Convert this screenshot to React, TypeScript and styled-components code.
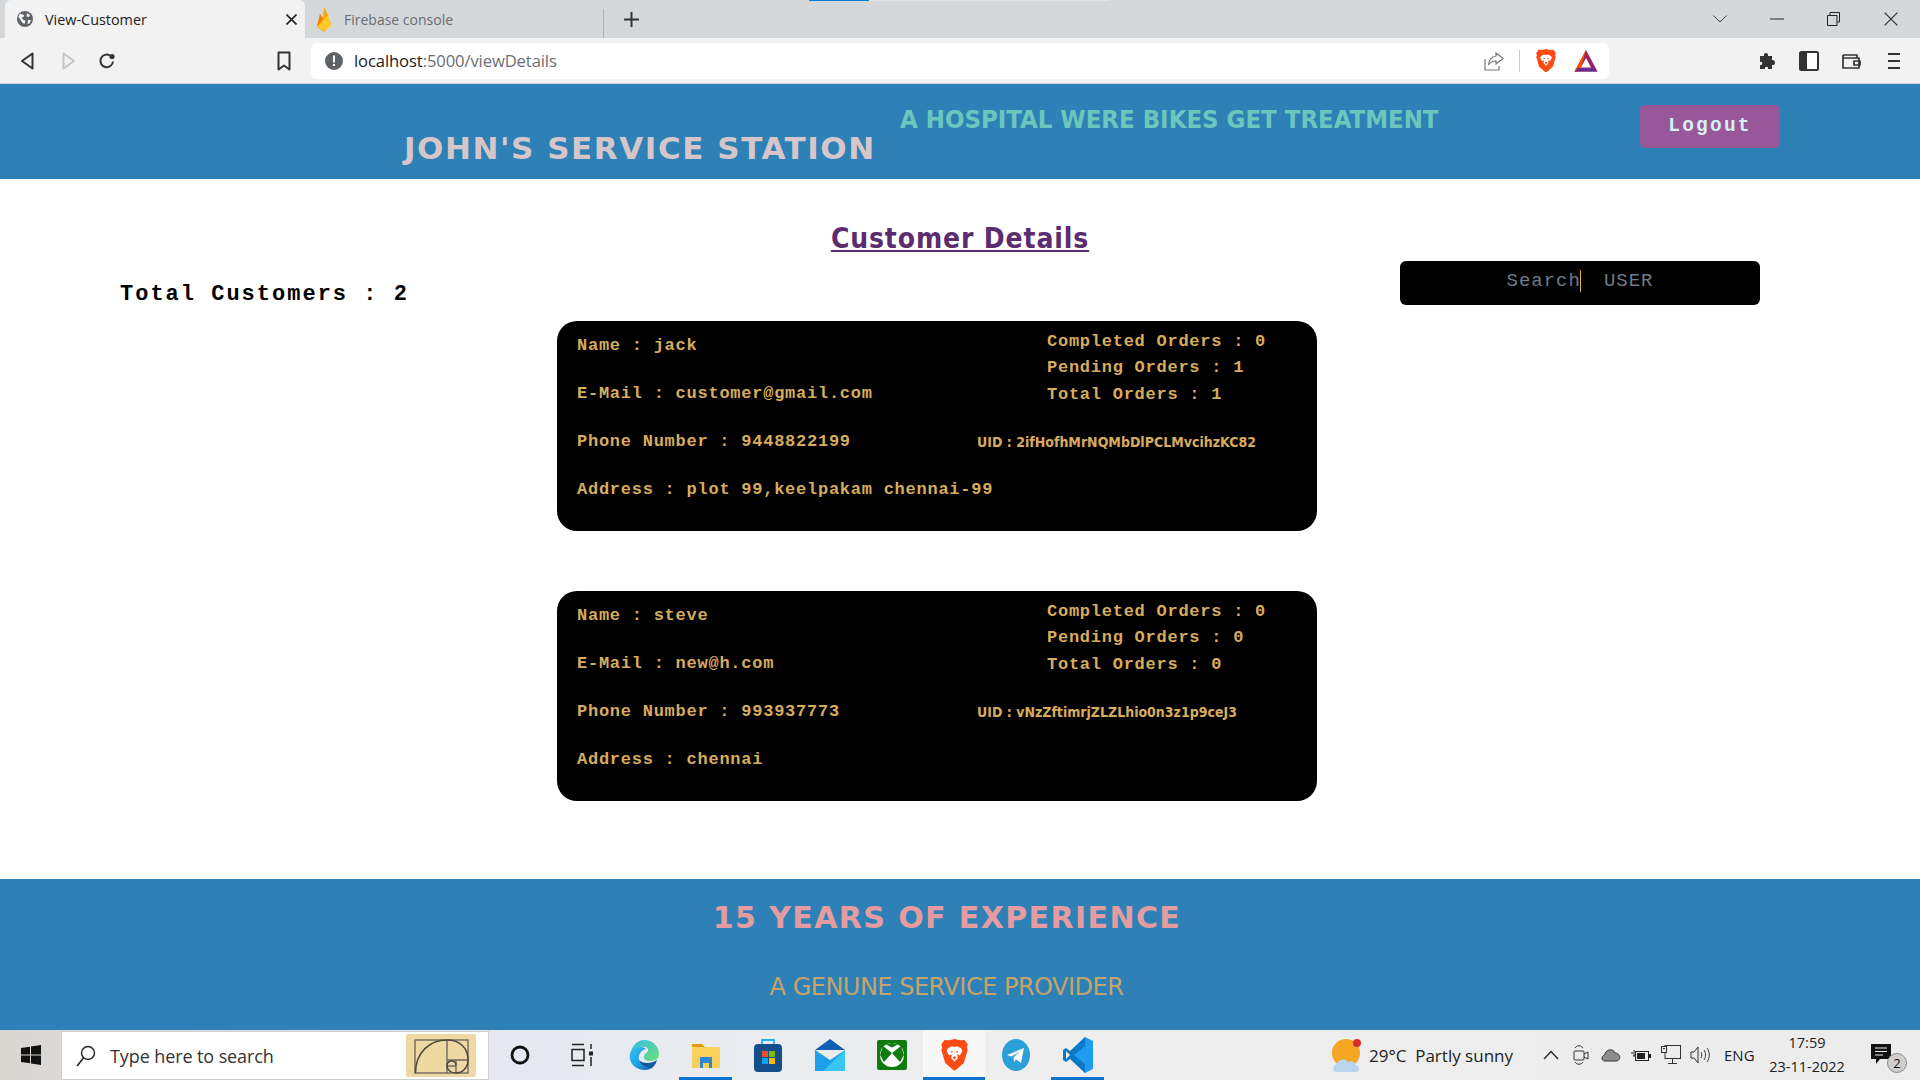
import React from "react";
import styled, { createGlobalStyle } from "styled-components";

const Global = createGlobalStyle`
  html, body { margin: 0; padding: 0; background: #fff; }
  #root { width: 1920px; height: 1080px; overflow: hidden; }
  * { box-sizing: border-box; }
`;

const Screen = styled.div`
  width: 1920px; height: 1080px; display: flex; flex-direction: column; position: relative;
  font-family: "Open Sans", "Liberation Sans", sans-serif;
`;

/* ---- browser chrome ---- */
const TabStrip = styled.div`
  height: 38px; background: #d5d8db; display: flex; align-items: stretch; padding-left: 5px; position: relative;
`;
const ActiveTab = styled.div`
  width: 300px; background: #f2f2f2; border-radius: 6px 6px 0 0; display: flex; align-items: center;
  padding: 0 8px 0 12px; color: #202124; font-size: 14.4px; gap: 12px;
  span { flex: 1; }
`;
const IdleTab = styled.div`
  width: 299px; display: flex; align-items: center; padding-left: 11px; gap: 12px; color: #6a6c70; font-size: 14px;
  border-right: 1px solid #aeb1b5; margin: 9px 0 0; padding-bottom: 9px;
`;
const NewTab = styled.div`
  width: 54px; display: flex; align-items: center; justify-content: center;
`;
const LoadBar = styled.div`
  position: absolute; left: 809px; top: 0; width: 301px; height: 1px; background: #e2e3e5;
  i { display: block; width: 60px; height: 1px; background: #0a7bd8; }
`;
const WindowButtons = styled.div`
  margin-left: auto; display: flex; align-items: center; padding-right: 1px;
`;
const WinBtn = styled.div<{ $w?: number }>`
  width: ${p => p.$w ?? 57}px; display: flex; align-items: center; justify-content: center; height: 38px;
`;
const Toolbar = styled.div`
  height: 46px; background: #f2f2f2; border-bottom: 1px solid #d4d6d8; display: flex; align-items: center;
`;
const ToolBtn = styled.div<{ $w: number }>`
  width: ${p => p.$w}px; height: 36px; display: flex; align-items: center; justify-content: center; flex: none;
`;
const BookmarkBtn = styled(ToolBtn)` justify-content: flex-end; padding-right: 12px; `;
const ExtensionBtn = styled(ToolBtn)` margin-left: 138px; `;
const Omnibox = styled.div`
  width: 1298px; height: 36px; margin-left: 8px; background: #fff; border-radius: 6px; display: flex; align-items: center;
  padding-left: 14px; font-size: 16.6px; color: #6b6e72; flex: none;
  b { font-weight: 400; color: #202124; }
`;
const UrlText = styled.span` margin-left: 11px; flex: 1; letter-spacing: -0.1px; `;

/* ---- page ---- */
const Header = styled.header`
  height: 95px; background: #2e81b7; display: flex; align-items: flex-start; flex: none;
`;
const Brand = styled.h1`
  margin: 46px 0 0 404px; font: 700 31px/36px "DejaVu Sans", sans-serif; color: #d6c6ca; letter-spacing: 1.55px; white-space: nowrap;
  width: 496px;
`;
const Tagline = styled.div`
  margin-top: 19px; font: 700 25.5px/32px "DejaVu Sans", sans-serif; font-stretch: condensed; color: #6cc6bc; white-space: nowrap; width: 540px;
`;
const LogoutButton = styled.button`
  margin: 21px 0 0 200px; width: 140px; height: 43px; background: #985799; color: #d3f1f1; border: 0; border-radius: 5px;
  font: 700 19.5px "Liberation Mono", monospace; letter-spacing: 2.2px; padding: 0 0 2px;
`;
const Main = styled.main`
  flex: 1; background: #fff; display: flex; flex-direction: column; min-height: 0;
`;
const Title = styled.h2`
  margin: 39px 0 0; height: 42px; text-align: center; color: #5b2c6f; text-decoration: underline;
  font: 700 28px/42px "DejaVu Sans", sans-serif; font-stretch: condensed; letter-spacing: 0.85px;
`;
const ToolsRow = styled.div`
  display: flex; justify-content: space-between; align-items: flex-start; height: 44px; margin-top: 1px; padding: 0 160px 0 120px;
`;
const Total = styled.div`
  font: 700 22px/44px "Liberation Mono", monospace; color: #000; letter-spacing: 2px; margin-top: 12px;
`;
const SearchBox = styled.div`
  width: 360px; height: 44px; background: #000; border-radius: 6px; display: flex; align-items: center; justify-content: center;
  font: 400 19px "Liberation Mono", monospace; letter-spacing: 1px; color: #6f7b86; white-space: pre; padding-bottom: 4px;
`;
const Caret = styled.i`
  display: inline-block; width: 1px; height: 22px; background: #e0b030; margin: 0 23px 0 -1px;
`;
const CardList = styled.div`
  display: flex; flex-direction: column; gap: 60px; margin: 16px 0 0 557px; width: 760px;
`;
const Card = styled.article`
  height: 210px; background: #000; border-radius: 20px; color: #d8ac5c; display: grid; grid-template-columns: 400px 340px;
  padding: 1px 0 0 20px; font: 700 17px "Liberation Mono", monospace; letter-spacing: 0.75px;
`;
const Field = styled.div` line-height: 48px; white-space: nowrap; width: 400px; `;
const Stats = styled.div` padding-top: 7px; `;
const Stat = styled.div` line-height: 26.3px; margin-left: 70px; white-space: nowrap; `;
const Uid = styled.div`
  margin-top: 21px; font: 700 14px/26px "DejaVu Sans", sans-serif; font-stretch: condensed; letter-spacing: 0; white-space: nowrap;
`;
const Footer = styled.footer`
  height: 151px; background: #2e81b7; flex: none; text-align: center;
`;
const FooterTitle = styled.div`
  margin: 19px 26px 0 0; font: 700 30px/40px "DejaVu Sans", sans-serif; color: #e59ca0; letter-spacing: 1.4px;
`;
const FooterSub = styled.div`
  margin: 34px 27px 0 0; font: 400 24px/30px "DejaVu Sans", sans-serif; color: #c6a36a; letter-spacing: -0.5px;
`;

/* ---- taskbar ---- */
const Taskbar = styled.div`
  height: 50px; flex: none; display: flex; align-items: stretch;
  background: linear-gradient(90deg, #d9d6d2 0, #e6e9f2 500px, #eeeeee 1000px, #ececec 100%);
`;
const StartBtn = styled.div` width: 61px; display: flex; align-items: center; justify-content: center; `;
const SearchField = styled.div`
  width: 428px; margin-top: 1px; background: #fff; border: 1px solid #cfcfcf; display: flex; align-items: center;
  padding: 0 12px 0 13px; font-size: 18px; color: #333; gap: 13px;
  span { flex: 1; letter-spacing: -0.1px; }
`;
const TaskTile = styled.div<{ $open?: boolean; $active?: boolean }>`
  width: 62px; display: flex; align-items: center; justify-content: center; position: relative;
  background: ${p => (p.$active ? "#f7f7f7" : "transparent")};
  &::after {
    content: ""; position: absolute; bottom: 0; height: 3px; left: ${p => (p.$active ? 0 : 4)}px; right: ${p => (p.$active ? 0 : 5)}px;
    background: ${p => (p.$open || p.$active ? "#0a74d0" : "transparent")};
  }
`;
const Tray = styled.div`
  margin-left: auto; display: flex; align-items: center; color: #222; font-size: 17px;
`;
const TrayIcon = styled.div<{ $w: number }>`
  width: ${p => p.$w}px; display: flex; align-items: center; justify-content: center; height: 50px;
`;
const Weather = styled.span` margin: 0 23px 0 8px; white-space: pre; `;
const Lang = styled.span` font-size: 15px; margin: 0 0 0 10px; width: 33px; `;
const Clock = styled.div`
  width: 100px; text-align: center; font-size: 14.5px; line-height: 24px; margin-right: 9px;
`;
const Notif = styled.div` width: 54px; height: 50px; position: relative; display: flex; align-items: center; padding-left: 5px; `;
const NotifBadge = styled.span`
  position: absolute; left: 21px; top: 23px; width: 20px; height: 20px; border-radius: 50%; background: #cfcfcf;
  border: 1px solid #8c8c8c; font-size: 13px; line-height: 18px; text-align: center; color: #111;
`;

/* ---- icons ---- */
const Globe = () => (
  <svg width="16" height="16" viewBox="0 0 16 16"><circle cx="8" cy="8" r="8" fill="#5f6368" /><path d="M3 2.500 7 4 6.500 6 4.500 6.500 6.500 9 8.500 9.500 7.500 13 5 11.500 3 8 1.300 6ZM10 2l3 2-1 2-2.500-.5ZM11 9l3 0-1.500 3.500-2 .5Z" fill="#f2f2f2" /></svg>
);
const Close = ({ s = 11, c = "#202124", w = 1.6 }: { s?: number; c?: string; w?: number }) => (
  <svg width={s} height={s} viewBox="0 0 11 11"><path d="M.5.5l10 10M10.500.5l-10 10" stroke={c} strokeWidth={w} fill="none" /></svg>
);
const Firebase = () => (
  <svg width="16" height="25" viewBox="0 0 16 25"><path d="M1 20 4 7 7 11 8.500 0 15 17 8 25Z" fill="#ffa000" /><path d="M1 20 4 7 7 12Z" fill="#f57c00" /><path d="M1 20 12 8 15 19 8 24Z" fill="#ffca28" /></svg>
);
const Plus = () => (
  <svg width="15" height="15" viewBox="0 0 15 15"><path d="M7.500 0v15M0 7.500h15" stroke="#333" strokeWidth="2" /></svg>
);
const Triangle = ({ c, flip }: { c: string; flip?: boolean }) => (
  <svg width="14" height="18" viewBox="0 0 14 18" transform={flip ? "scale(-1 1)" : undefined}><path d="M12.500 1.500 2 9l10.500 7.500Z" fill="none" stroke={c} strokeWidth="2" strokeLinejoin="round" /></svg>
);
const Reload = () => (
  <svg width="18" height="18" viewBox="0 0 18 18"><path d="M15 9.500A6.300 6.300 0 1 1 12 3.500" fill="none" stroke="#333" strokeWidth="2" /><circle cx="14" cy="4.500" r="2.600" fill="#333" /></svg>
);
const Bookmark = () => (
  <svg width="14" height="20" viewBox="0 0 14 20"><path d="M1.500 1.500h11v17L7 14.500l-5.500 4Z" fill="none" stroke="#333" strokeWidth="2" strokeLinejoin="round" /></svg>
);
const Alert = () => (
  <svg width="18" height="18" viewBox="0 0 18 18"><circle cx="9" cy="9" r="9" fill="#5f6368" /><rect x="8" y="3.500" width="2" height="7" fill="#fff" /><rect x="8" y="12" width="2" height="2" fill="#fff" /></svg>
);
const Share = () => (
  <svg width="20" height="20" viewBox="0 0 20 20"><path d="M12 2 19 7.500 12 13V10C8 10 6 11.500 4.500 14 5 9 8 5.500 12 5ZM1 8v11h14v-4" fill="none" stroke="#777" strokeWidth="1.200" /></svg>
);
const Brave = ({ s = 20 }: { s?: number }) => (
  <svg width={s} height={s * 1.18} viewBox="0 0 20 24">
    <path d="M10 0 14 1 17.500 .8 20 4 19.200 6.500 20 8 17 18 12 22.500 10 24 8 22.500 3 18 0 8 .8 6.500 0 4 2.500 .8 6 1Z" fill="#fb4b12" />
    <path d="M5 7 8 5.500 10 6 12 5.500 15 7 16 9 14 12.500 12 11.500 12.500 14.500 10 17 7.500 14.500 8 11.500 6 12.500 4 9Z" fill="#fff" />
    <path d="M7 9 9 9.500 8 10.500ZM13 9 11 9.500 12 10.500ZM8.500 14 10 13 11.500 14 10 15.500Z" fill="#fb4b12" />
  </svg>
);
const Bat = () => (
  <svg width="24" height="24" viewBox="0 0 24 24"><path d="M12 1 23.500 22.500H.5Z" fill="#9e1f63" /><path d="M12 1 6 22.500H.5Z" fill="#ff5000" /><path d="M.5 22.500 4 19H20L23.500 22.500Z" fill="#662d91" /><path d="M12 9 17 18.500H7Z" fill="#fff" /></svg>
);
const Puzzle = () => (
  <svg width="20" height="20" viewBox="0 0 20 20"><path d="M2 5h4c-1-4 5-4 4 0h4v4c4-1 4 6 0 5v4h-4c1-3-4-3-3 0H2v-4c3 1 3-4 0-3Z" fill="#333" /></svg>
);
const SidePanel = () => (
  <svg width="20" height="20" viewBox="0 0 20 20"><rect x="1" y="1" width="18" height="18" rx="1.500" fill="#fff" stroke="#333" strokeWidth="2" /><rect x="1" y="1" width="7" height="18" fill="#333" /></svg>
);
const Wallet = () => (
  <svg width="20" height="20" viewBox="0 0 20 20"><path d="M2 4h14v3M2 4v13h16V7H2M13 10h6v4h-6Z" fill="none" stroke="#333" strokeWidth="1.700" strokeLinejoin="round" /></svg>
);
const Menu = () => (
  <svg width="12" height="18" viewBox="0 0 12 18"><path d="M0 2h12M0 9h12M0 16h12" stroke="#333" strokeWidth="1.800" /></svg>
);
const WinLogo = () => (
  <svg width="20" height="20" viewBox="0 0 20 20"><path d="M0 3 9 1.700V9.500H0ZM10 1.500 20 0V9.500H10ZM0 10.500H9V18.300L0 17ZM10 10.500H20V20L10 18.500Z" fill="#111" /></svg>
);
const Lens = () => (
  <svg width="22" height="24" viewBox="0 0 22 24"><circle cx="13" cy="9" r="6.500" fill="none" stroke="#222" strokeWidth="1.400" /><path d="M8.500 14 2 22" stroke="#222" strokeWidth="1.600" /></svg>
);
const Golden = () => (
  <svg width="70" height="43" viewBox="0 0 70 43">
    <rect width="70" height="43" rx="2" fill="#efd9a3" />
    <g fill="none" stroke="#6f6a60" strokeWidth="1.400"><rect x="9" y="6" width="53" height="33" /><path d="M41 6v33M41 26h21M50 26v13M41 32h9" /></g>
    <path d="M9.500 39C9.500 18 24 6 41 6 54 6 62 14 62 26 62 34 56 39 50 39 45 39 41 36 41 32 41 29 43 27 46 27 48 27 50 29 50 31" fill="none" stroke="#4a4640" strokeWidth="1.500" />
  </svg>
);
const Cortana = () => (
  <svg width="22" height="22" viewBox="0 0 22 22"><circle cx="11" cy="11" r="8" fill="none" stroke="#111" strokeWidth="2.800" /></svg>
);
const TaskView = () => (
  <svg width="22" height="24" viewBox="0 0 22 24"><path d="M1 1.500h12M1 22.500h12M1 6.500h12v11H1ZM20 1v5M20 14v9" fill="none" stroke="#222" strokeWidth="1.500" /><rect x="18" y="8.500" width="4" height="4" fill="#222" /></svg>
);
const Edge = () => (
  <svg width="32" height="32" viewBox="0 0 32 32">
    <defs>
      <linearGradient id="eg" x1="0" y1="0" x2="1" y2="1"><stop offset="0" stopColor="#35c1f1" /><stop offset=".6" stopColor="#1b9de2" /><stop offset="1" stopColor="#0c59a4" /></linearGradient>
      <linearGradient id="eg2" x1="0" y1="0" x2="1" y2="1"><stop offset="0" stopColor="#2dbfe8" /><stop offset="1" stopColor="#6fe07a" /></linearGradient>
    </defs>
    <path d="M16 1C24 1 31 7 31 15 31 20 27 22 22 22 18 22 15 20 16 17 17 14 21 13 20 10 18 6 8 8 3 12 5 6 10 1 16 1Z" fill="url(#eg2)" />
    <path d="M3 12C7 7 16 7 18 10 13 11 10 16 11 21 12 26 18 30 24 29 20 32 10 32 5 26 1 21 1 16 3 12Z" fill="url(#eg)" />
    <path d="M11 21C14 25 24 25 29 21 28 25 26 27 24 29 18 30 12 26 11 21Z" fill="#0c59a4" />
  </svg>
);
const Explorer = () => (
  <svg width="30" height="28" viewBox="0 0 30 28"><path d="M1 3h10l3 3H1Z" fill="#e39c0b" /><path d="M1 6h28v21H1Z" fill="#fbd05a" /><path d="M9 16h12v11h-3v-5h-6v5H9Z" fill="#2f87d0" /></svg>
);
const Store = () => (
  <svg width="30" height="34" viewBox="0 0 30 34"><path d="M9 7V2h12v5" fill="none" stroke="#21b3ee" strokeWidth="1.800" /><rect x="1" y="6" width="28" height="28" rx="4" fill="#144f8c" /><rect x="9" y="13" width="6" height="6" fill="#f25022" /><rect x="16" y="13" width="6" height="6" fill="#7fba00" /><rect x="9" y="20" width="6" height="6" fill="#00a4ef" /><rect x="16" y="20" width="6" height="6" fill="#ffb900" /></svg>
);
const Mail = () => (
  <svg width="30" height="32" viewBox="0 0 30 32"><path d="M0 11 15 0 30 11Z" fill="#0f5fb3" /><path d="M4 11H26L15 19Z" fill="#e8ecef" /><path d="M0 11 15 21 30 11V32H0Z" fill="#1f9fe8" /><path d="M30 11V32H8Z" fill="#38c6f4" /></svg>
);
const Xbox = () => (
  <svg width="30" height="30" viewBox="0 0 30 30"><rect width="30" height="30" rx="2" fill="#107c10" /><circle cx="15" cy="15" r="12" fill="#fff" /><path d="M15 13 7 22 3 15 6 6ZM15 13 23 22 27 15 24 6ZM9 4.500 15 7.500 21 4.500 15 2.800Z" fill="#107c10" /></svg>
);
const Telegram = () => (
  <svg width="28" height="32" viewBox="0 0 28 32"><ellipse cx="14" cy="16" rx="14" ry="16" fill="#2a9fd8" /><path d="M5 16 22 9 19 24 14 20.500 12 23 11.500 18.500 18 12.500 9.500 17.500Z" fill="#fff" /></svg>
);
const VSCode = () => (
  <svg width="30" height="36" viewBox="0 0 30 36"><path d="M22 0 30 4V32L22 36 8 20 22 0Z" fill="#1f9cf0" /><path d="M22 0 22 9 11 18 22 27V36L7 22 3 25 0 23V13L3 11 7 14Z" fill="#0a7ac6" /><path d="M3 14V22L7 18Z" fill="#eee" /></svg>
);
const Sun = () => (
  <svg width="30" height="34" viewBox="0 0 30 34">
    <circle cx="15" cy="15" r="14" fill="#f5a623" /><circle cx="26" cy="5" r="4" fill="#d92b2b" />
    <path d="M6 34C1 34 1 27 6 26 7 21 15 20 17 24 21 22 25 25 24 27 29 27 29 34 25 34Z" fill="#b9d4ef" />
  </svg>
);
const Chevron = () => (
  <svg width="16" height="10" viewBox="0 0 16 10"><path d="M1 9 8 1.500 15 9" fill="none" stroke="#222" strokeWidth="1.300" /></svg>
);
const Meet = () => (
  <svg width="16" height="22" viewBox="0 0 16 22"><path d="M2 4C4 1 8 1 10 4M2 18C4 21 8 21 10 18" fill="none" stroke="#333" /><rect x="1" y="7" width="10" height="9" rx="1" fill="none" stroke="#333" /><path d="M11 10 15 8V15L11 13" fill="none" stroke="#333" /></svg>
);
const Cloud = () => (
  <svg width="20" height="14" viewBox="0 0 20 14"><path d="M4 13C0 13 0 8 3.500 7 5 1 12 0 14 5 18 5 20 9 18 11.500 17 13 16 13 15 13Z" fill="#8d8d8d" stroke="#333" /></svg>
);
const Battery = () => (
  <svg width="20" height="14" viewBox="0 0 20 14"><path d="M0 5h2M3 2v6M2 8h2" stroke="#222" /><rect x="4.500" y="3.500" width="13" height="9" fill="none" stroke="#222" /><rect x="6" y="5" width="8" height="6" fill="#222" /><rect x="18" y="6" width="2" height="4" fill="#222" /></svg>
);
const Net = () => (
  <svg width="20" height="20" viewBox="0 0 20 20"><rect x="4" y=".5" width="15.500" height="13" fill="none" stroke="#333" /><path d="M11.500 14v4M7 18.500h9" stroke="#333" /><rect x=".5" y="1.500" width="5" height="6" fill="#eee" stroke="#333" /><rect x="2" y="3" width="2" height="1" fill="#333" /></svg>
);
const Speaker = () => (
  <svg width="20" height="20" viewBox="0 0 20 20"><path d="M1 7h3l4-5v16l-4-5H1Z" fill="none" stroke="#333" /><path d="M11 7c1 2 1 4 0 6M14 5c2 3 2 7 0 10M17 3c3 4 3 10 0 14" fill="none" stroke="#333" /></svg>
);
const Bubble = () => (
  <svg width="20" height="22" viewBox="0 0 20 22"><path d="M0 0H20V15H9L5 20V15H0Z" fill="#111" /><path d="M4 4H16M4 7.500H16M4 11H12" stroke="#eee" /></svg>
);

type Customer = { name: string; email: string; phone: string; address: string; done: number; pending: number; total: number; uid: string };
const customers: Customer[] = [
  { name: "jack", email: "customer@gmail.com", phone: "9448822199", address: "plot 99,keelpakam chennai-99", done: 0, pending: 1, total: 1, uid: "2ifHofhMrNQMbDlPCLMvcihzKC82" },
  { name: "steve", email: "new@h.com", phone: "993937773", address: "chennai", done: 0, pending: 0, total: 0, uid: "vNzZftimrjZLZLhio0n3z1p9ceJ3" },
];

export default function App() {
  return (
    <Screen>
      <Global />
      <TabStrip>
        <LoadBar><i /></LoadBar>
        <ActiveTab><Globe /><span>View-Customer</span><Close /></ActiveTab>
        <IdleTab><Firebase /><span>Firebase console</span></IdleTab>
        <NewTab><Plus /></NewTab>
        <WindowButtons>
          <WinBtn><svg width="14" height="8" viewBox="0 0 14 8"><path d="M.5.5 7 7 13.500.5" fill="none" stroke="#444" /></svg></WinBtn>
          <WinBtn><svg width="14" height="2" viewBox="0 0 14 2"><path d="M0 1h14" stroke="#222" /></svg></WinBtn>
          <WinBtn><svg width="13" height="14" viewBox="0 0 13 14"><path d="M3 3V.5h9.500V10H10M.5 3.500H10V13.500H.5Z" fill="none" stroke="#222" /></svg></WinBtn>
          <WinBtn><Close s={14} c="#333" w={1} /></WinBtn>
        </WindowButtons>
      </TabStrip>
      <Toolbar>
        <ToolBtn $w={54}><Triangle c="#333" /></ToolBtn>
        <ToolBtn $w={30}><Triangle c="#c4c4c4" flip /></ToolBtn>
        <ToolBtn $w={46}><Reload /></ToolBtn>
        <BookmarkBtn $w={173}><Bookmark /></BookmarkBtn>
        <Omnibox>
          <Alert />
          <UrlText><b>localhost</b>:5000/viewDetails</UrlText>
          <ToolBtn $w={30}><Share /></ToolBtn>
          <ToolBtn $w={20}><svg width="1" height="22"><rect width="1" height="22" fill="#c8c8c8" /></svg></ToolBtn>
          <ToolBtn $w={34}><Brave /></ToolBtn>
          <ToolBtn $w={46}><Bat /></ToolBtn>
        </Omnibox>
        <ExtensionBtn $w={42}><Puzzle /></ExtensionBtn>
        <ToolBtn $w={40}><SidePanel /></ToolBtn>
        <ToolBtn $w={43}><Wallet /></ToolBtn>
        <ToolBtn $w={43}><Menu /></ToolBtn>
      </Toolbar>
      <Header>
        <Brand>JOHN'S SERVICE STATION</Brand>
        <Tagline>A HOSPITAL WERE BIKES GET TREATMENT</Tagline>
        <LogoutButton>Logout</LogoutButton>
      </Header>
      <Main>
        <Title>Customer Details</Title>
        <ToolsRow>
          <Total>Total Customers : 2</Total>
          <SearchBox>Search<Caret />USER</SearchBox>
        </ToolsRow>
        <CardList>
          {customers.map(c => (
            <Card key={c.uid}>
              <div>
                <Field>Name : {c.name}</Field>
                <Field>E-Mail : {c.email}</Field>
                <Field>Phone Number : {c.phone}</Field>
                <Field>Address : {c.address}</Field>
              </div>
              <Stats>
                <Stat>Completed Orders : {c.done}</Stat>
                <Stat>Pending Orders : {c.pending}</Stat>
                <Stat>Total Orders : {c.total}</Stat>
                <Uid>UID : {c.uid}</Uid>
              </Stats>
            </Card>
          ))}
        </CardList>
      </Main>
      <Footer>
        <FooterTitle>15 YEARS OF EXPERIENCE</FooterTitle>
        <FooterSub>A GENUNE SERVICE PROVIDER</FooterSub>
      </Footer>
      <Taskbar>
        <StartBtn><WinLogo /></StartBtn>
        <SearchField><Lens /><span>Type here to search</span><Golden /></SearchField>
        <TaskTile><Cortana /></TaskTile>
        <TaskTile><TaskView /></TaskTile>
        <TaskTile><Edge /></TaskTile>
        <TaskTile $open><Explorer /></TaskTile>
        <TaskTile><Store /></TaskTile>
        <TaskTile><Mail /></TaskTile>
        <TaskTile><Xbox /></TaskTile>
        <TaskTile $active><Brave s={27} /></TaskTile>
        <TaskTile><Telegram /></TaskTile>
        <TaskTile $open><VSCode /></TaskTile>
        <Tray>
          <TrayIcon $w={30}><Sun /></TrayIcon>
          <Weather>29°C  Partly sunny</Weather>
          <TrayIcon $w={30}><Chevron /></TrayIcon>
          <TrayIcon $w={30}><Meet /></TrayIcon>
          <TrayIcon $w={30}><Cloud /></TrayIcon>
          <TrayIcon $w={30}><Battery /></TrayIcon>
          <TrayIcon $w={30}><Net /></TrayIcon>
          <TrayIcon $w={28}><Speaker /></TrayIcon>
          <Lang>ENG</Lang>
          <Clock>17:59<br />23-11-2022</Clock>
          <Notif><Bubble /><NotifBadge>2</NotifBadge></Notif>
        </Tray>
      </Taskbar>
    </Screen>
  );
}
